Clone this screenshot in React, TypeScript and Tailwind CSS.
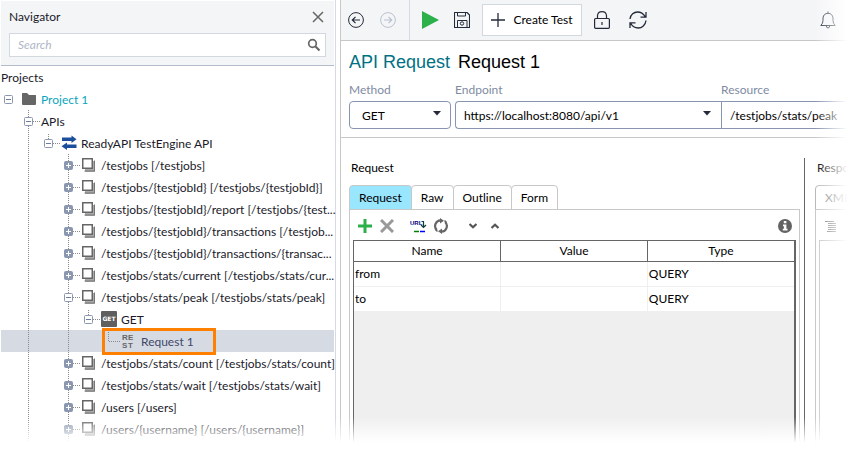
import React, { useState } from 'react';
import clsx from 'clsx';

type NodeIcon = 'folder' | 'api' | 'resource' | 'get' | 'rest';

interface TreeNode {
  label: string;
  depth: number;
  icon?: NodeIcon;
  toggle?: 'open' | 'closed';
  // columns where an ancestor's guide line runs through this row
  guides: number[];
  // the node's own guide stops at the toggle
  last?: boolean;
  selected?: boolean;
  className?: string;
}

const resource = (label: string, toggle: 'open' | 'closed' = 'closed'): TreeNode => ({
  label,
  depth: 3,
  icon: 'resource',
  toggle,
  guides: [1],
});

const NODES: TreeNode[] = [
  { label: 'Project 1', depth: 0, icon: 'folder', toggle: 'open', guides: [], last: true, className: 'text-[#0aa5bd]' },
  { label: 'APIs', depth: 1, toggle: 'open', guides: [] },
  { label: 'ReadyAPI TestEngine API', depth: 2, icon: 'api', toggle: 'open', guides: [1], last: true },
  resource('/testjobs [/testjobs]'),
  resource('/testjobs/{testjobId} [/testjobs/{testjobId}]'),
  resource('/testjobs/{testjobId}/report [/testjobs/{test...'),
  resource('/testjobs/{testjobId}/transactions [/testjob...'),
  resource('/testjobs/{testjobId}/transactions/{transac...'),
  resource('/testjobs/stats/current [/testjobs/stats/cur...'),
  resource('/testjobs/stats/peak [/testjobs/stats/peak]', 'open'),
  { label: 'GET', depth: 4, icon: 'get', toggle: 'open', guides: [1, 3], last: true },
  { label: 'Request 1', depth: 5, icon: 'rest', guides: [1, 3], last: true, selected: true, className: 'text-[#41486a]' },
  resource('/testjobs/stats/count [/testjobs/stats/count]'),
  resource('/testjobs/stats/wait [/testjobs/stats/wait]'),
  resource('/users [/users]'),
  resource('/users/{username} [/users/{username}]'),
];

const PARAMS = [
  { name: 'from', value: '', type: 'QUERY' },
  { name: 'to', value: '', type: 'QUERY' },
];

const TABS = ['Request', 'Raw', 'Outline', 'Form'];

const TreeIcon: React.FC<{ icon: NodeIcon }> = ({ icon }) => {
  switch (icon) {
    case 'folder':
      return (
        <svg width="16" height="16" viewBox="0 0 16 16" fill="#666">
          <path d="M1 2.500Q1 2 1.500 2H6l2 2h6.500q.5 0 .5.500V13q0 1-1 1H2q-1 0-1-1z" />
        </svg>
      );
    case 'api':
      return (
        <svg width="16" height="16" viewBox="0 0 16 16" fill="#1b4f9c">
          <path d="M1 2.500h9.500V.500L15.500 4.300l-5 3.700V6H1zM15.500 9.500H6v-2L.500 11.300 6 15v-2h9.500z" />
        </svg>
      );
    case 'resource':
      return (
        <svg width="16" height="16" viewBox="0 0 16 16">
          <path d="M12.500 4v9.500H4" fill="none" stroke="#aaa" strokeWidth="3" />
          <path d="M13.500 3.500v10.500H3.500" fill="none" stroke="#777" strokeWidth="1" />
          <rect x="1.750" y="1.750" width="9.500" height="9.500" fill="#fff" stroke="#666" strokeWidth="1.500" />
        </svg>
      );
    case 'get':
      return (
        <svg width="16" height="16" viewBox="0 0 16 16">
          <rect width="16" height="16" rx="1" fill="#5f5f5f" />
          <text x="8" y="10" textAnchor="middle" fill="#fff" fontSize="6" fontWeight="900" fontFamily="DejaVu Sans, sans-serif">GET</text>
        </svg>
      );
    case 'rest':
      return (
        <svg width="16" height="18" viewBox="0 0 16 18" fill="#666" fontSize="8" fontWeight="700" fontFamily="Liberation Sans, sans-serif">
          <text x="1" y="8">R</text>
          <text x="7" y="8">E</text>
          <text x="1" y="16">S</text>
          <text x="7" y="16">T</text>
        </svg>
      );
  }
};

const Guide: React.FC<{ node: TreeNode; column: number }> = ({ node, column }) => {
  const own = column === node.depth;
  const through = node.guides.includes(column) || (own && !node.last);
  const top = own && node.last && column > 0;
  return (
    <svg className="shrink-0" width="20" height="22" viewBox="0 0 20 22" shapeRendering="crispEdges">
      {through && <path d="M7.500 0v22" stroke="#8a8a8a" strokeDasharray="1 1" />}
      {top && <path d="M7.500 2v10" stroke="#8a8a8a" strokeDasharray="1 1" />}
      {own && column > 0 && <path d="M8 11.500h11" stroke="#8a8a8a" strokeDasharray="1 1" />}
      {own && node.toggle && (
        <g shapeRendering="auto">
          <rect
            x="3.500"
            y="7.500"
            width="8"
            height="8"
            rx="1"
            fill={node.toggle === 'open' ? '#fff' : '#8b97b0'}
            stroke="#8b97b0"
          />
          <path
            d={node.toggle === 'open' ? 'M5 11.500h5' : 'M5 11.500h5M7.500 9v5'}
            stroke={node.toggle === 'open' ? '#6f7c98' : '#fff'}
          />
        </g>
      )}
    </svg>
  );
};

const TreeRow: React.FC<{ node: TreeNode }> = ({ node }) => (
  <li
    role="treeitem"
    aria-level={node.depth + 1}
    aria-selected={!!node.selected}
    className={clsx('relative flex h-[22px] items-center whitespace-nowrap', node.selected && 'bg-[#d6dbe3]')}
  >
    {Array.from({ length: node.depth + 1 }, (_, i) => (
      <Guide key={i} node={node} column={i} />
    ))}
    {node.icon && (
      <span className="w-5 shrink-0">
        <TreeIcon icon={node.icon} />
      </span>
    )}
    <span className={clsx('pt-0.5 leading-5', node.className)}>{node.label}</span>
    {node.selected && <span className="absolute -top-0.5 left-[101px] h-[27px] w-[114px] border-3 border-[#ff8000]" />}
  </li>
);

const Navigator: React.FC = () => (
  <aside className="ml-px w-[335px] shrink-0 border-r border-[#d5dae3] pr-px">
    <div className="mt-px border-b border-[#b4bccb] bg-[#f4f5f7] px-2 pb-2">
      <div className="flex h-8 items-center justify-between">
        <h2>Navigator</h2>
        <button aria-label="Close" className="mr-0.5">
          <svg width="12" height="12" viewBox="0 0 12 12" stroke="#666" strokeWidth="1.500">
            <path d="M1 1l10 10M11 1L1 11" />
          </svg>
        </button>
      </div>
      <label className="flex h-6 items-center border border-[#d2d7e0] bg-white pr-1 pl-2">
        <input
          type="text"
          aria-label="Search"
          placeholder="Search"
          className="min-w-0 flex-1 outline-none placeholder:text-[#b0b7c6] placeholder:italic"
        />
        <svg width="14" height="14" viewBox="0 0 14 14" fill="none" stroke="#666">
          <circle cx="5.500" cy="5.500" r="3.800" strokeWidth="1.700" />
          <path d="M8.500 8.500l4 4" strokeWidth="2.200" />
        </svg>
      </label>
    </div>
    <h3 className="h-[22px] leading-6">Projects</h3>
    <ul role="tree" aria-label="Projects">
      {NODES.map((node) => (
        <TreeRow key={node.label} node={node} />
      ))}
    </ul>
    <svg width="120" height="22" viewBox="0 0 120 22" shapeRendering="crispEdges">
      <path d="M27.500 0v22M67.500 0v22" stroke="#8a8a8a" strokeDasharray="1 1" />
      <rect x="81.500" y="5.500" width="10" height="10" fill="#fff" stroke="#666" />
    </svg>
  </aside>
);

const Toolbar: React.FC = () => (
  <header className="flex h-[41px] items-center border-b border-[#c8c8c8] bg-[#f4f5f7] text-[#242a3a]">
    <div className="flex h-full w-[69px] items-center gap-4 border-r border-[#d5dae3] pl-[7px]">
      <button aria-label="Back">
        <svg width="16" height="16" viewBox="0 0 16 16" fill="none" stroke="currentColor">
          <circle cx="8" cy="8" r="7.400" />
          <path d="M12 8H4.500M7.500 4.800L4.300 8l3.200 3.200" strokeWidth="1.200" />
        </svg>
      </button>
      <button aria-label="Forward" className="text-[#b9c1cf]">
        <svg width="16" height="16" viewBox="0 0 16 16" fill="none" stroke="currentColor">
          <circle cx="8" cy="8" r="7.400" />
          <path d="M4 8h7.500M8.500 4.800L11.700 8l-3.200 3.200" strokeWidth="1.200" />
        </svg>
      </button>
    </div>
    <button aria-label="Run" className="ml-3">
      <svg width="17" height="18" viewBox="0 0 17 18" fill="#2bb04a">
        <path d="M0 0l17 9L0 18z" />
      </svg>
    </button>
    <button aria-label="Save" className="ml-[15px]">
      <svg width="16" height="16" viewBox="0 0 16 16" fill="none" stroke="currentColor">
        <path d="M.500.500H13l2.500 2.500v12.500H.500z" strokeLinejoin="round" strokeWidth="1.100" />
        <path d="M3.500.500v3.500h8V.500M3.500 15.500v-7h9.500v7" />
        <circle cx="8" cy="11.500" r="1.700" />
      </svg>
    </button>
    <button className="ml-3 flex h-8 w-[100px] items-center justify-center gap-2 border border-[#d2d7e0] bg-white text-black">
      <svg width="14" height="14" viewBox="0 0 14 14" stroke="#242a3a" strokeWidth="1.300">
        <path d="M0 7h14M7 0v14" />
      </svg>
      Create Test
    </button>
    <button aria-label="Lock" className="ml-3">
      <svg width="16" height="18" viewBox="0 0 16 18" fill="none" stroke="currentColor" strokeWidth="1.200">
        <rect x=".600" y="7.500" width="14.800" height="9.800" rx="1" />
        <path d="M3.500 7.500V4.500Q4 .700 8 .700t4.500 3.800v3M8 11v3" />
      </svg>
    </button>
    <button aria-label="Refresh" className="ml-[18px]">
      <svg width="20" height="18" viewBox="0 0 20 18" fill="none" stroke="currentColor" strokeWidth="1.300">
        <path d="M2 8C2.500 3.500 6 1 9.500 1c3.500 0 6 1.800 7.800 4.800M18 1v5.200h-5.500M18 9.500c-.5 4.500-4 7.500-7.800 7.500-3.400 0-6-1.800-7.700-5M2 17v-5.200h5.500" />
      </svg>
    </button>
    <button aria-label="Notifications" className="mr-[15px] ml-auto">
      <svg width="16" height="18" viewBox="0 0 16 18" fill="none" stroke="#242a3a">
        <path d="M.800 14.500Q3 12.500 3 9.500V7Q3.500 2.500 8 2.300 12.500 2.500 13 7v2.500q0 3 2.200 5zM8 2.300V.500M6.300 14.500q0 2.500 1.700 2.500t1.700-2.500" />
      </svg>
    </button>
  </header>
);

const Caret: React.FC = () => (
  <svg className="pointer-events-none absolute top-2.5 right-2.5" width="8" height="5" viewBox="0 0 8 5" fill="#242a3a">
    <path d="M0 0h8L4 4.500z" />
  </svg>
);

const RequestLine: React.FC = () => (
  <div className="flex border-b border-[#c8c8c8] pb-2 pl-2 text-[#808ba3]">
    <div className="mr-1 w-[102px] shrink-0">
      <label htmlFor="method" className="block h-[21px] leading-5">Method</label>
      <div className="relative">
        <select id="method" defaultValue="GET" className="h-7 w-full appearance-none rounded-sm border border-[#8795b0] bg-white pt-0.5 pl-3 text-black">
          <option>GET</option>
          <option>POST</option>
        </select>
        <Caret />
      </div>
    </div>
    <div className="min-w-0 flex-1">
      <label htmlFor="endpoint" className="block h-[21px] leading-5">Endpoint</label>
      <div className="relative">
        <select id="endpoint" className="h-7 w-full appearance-none rounded-l-sm border border-r-0 border-[#8795b0] bg-white pt-0.5 pl-2 text-black">
          <option>https://localhost:8080/api/v1</option>
        </select>
        <Caret />
      </div>
    </div>
    <div className="w-[130px] shrink-0">
      <label htmlFor="resource" className="block h-[21px] leading-5">Resource</label>
      <input id="resource" type="text" defaultValue="/testjobs/stats/peak" className="h-7 w-full border border-r-0 border-[#8795b0] px-2 text-black outline-none" />
    </div>
  </div>
);

const ParamsToolbar: React.FC = () => (
  <div className="flex h-[30px] items-center px-1 pt-0.5">
    <button aria-label="Add" className="ml-px">
      <svg width="14" height="14" viewBox="0 0 14 14" stroke="#2bb04a" strokeWidth="3">
        <path d="M0 7h14M7 0v14" />
      </svg>
    </button>
    <button aria-label="Remove" className="ml-2">
      <svg width="14" height="14" viewBox="0 0 14 14" stroke="#999" strokeWidth="3">
        <path d="M1 1l12 12M13 1L1 13" />
      </svg>
    </button>
    <button aria-label="Update from URL" className="ml-4">
      <svg width="18" height="14" viewBox="0 0 18 14">
        <text x="0" y="6" fill="#000080" fontSize="6" fontWeight="700" fontFamily="Liberation Sans, sans-serif">URL</text>
        <path d="M11.500 2.500h2V8M11 6l2.500 2.500L16 6" fill="none" stroke="#123c3c" strokeWidth="1.200" />
        <path d="M4 12.500h5" stroke="#008000" strokeWidth="1.500" />
        <path d="M10 12.500h5" stroke="#00f" strokeWidth="1.500" />
      </svg>
    </button>
    <button aria-label="Revert" className="ml-[5px]">
      <svg width="16" height="16" viewBox="0 0 16 16">
        <path d="M3.800 12A5.700 5.700 0 0 1 7.500 2.300M12.200 4a5.700 5.700 0 0 1-3.700 9.700" fill="none" stroke="#666" strokeWidth="2.200" />
        <path d="M7 0l4 2.700L7 5.500zM9 16l-4-2.700L9 10.500z" fill="#666" />
        <path d="M11.500 2.500l2 2M2.500 11.500l2 2" stroke="#666" strokeWidth="1.500" />
      </svg>
    </button>
    <button aria-label="Move down" className="ml-5">
      <svg width="8" height="6" viewBox="0 0 8 6" fill="none" stroke="#555" strokeWidth="2.200">
        <path d="M.500 1L4 4.300 7.500 1" />
      </svg>
    </button>
    <button aria-label="Move up" className="ml-3.5">
      <svg width="8" height="6" viewBox="0 0 8 6" fill="none" stroke="#555" strokeWidth="2.200">
        <path d="M.500 5L4 1.700 7.500 5" />
      </svg>
    </button>
    <button aria-label="Info" className="ml-auto">
      <svg width="14" height="14" viewBox="0 0 14 14">
        <circle cx="7" cy="7" r="7" fill="#636363" />
        <path d="M5.800 2h2.600v2.200H5.800zM5 5.500h3.400v4.300H9.500v1.700H4.800V9.800h1.100V7.200H5z" fill="#fff" />
      </svg>
    </button>
  </div>
);

const RequestPane: React.FC = () => {
  const [active, setActive] = useState('Request');
  return (
    <section className="mr-1 flex min-w-0 flex-1 flex-col pl-2">
      <h2 className="h-[27px] pl-0.5 leading-5">Request</h2>
      <div role="tablist" className="-mb-px flex">
        {TABS.map((tab) => (
          <button
            key={tab}
            role="tab"
            aria-selected={tab === active}
            onClick={() => setActive(tab)}
            className={clsx(
              '-mr-px h-[25px] rounded-t-sm border border-[#c8c8c8] px-[9px]',
              tab === active ? 'bg-[#99e6ff]' : 'bg-white'
            )}
          >
            {tab}
          </button>
        ))}
      </div>
      <div className="flex flex-1 flex-col border border-b-0 border-[#c8c8c8] px-[3px]">
        <ParamsToolbar />
        <div className="flex-1 border-l border-r-2 border-[#666] bg-[#efefef]">
          <table className="w-full table-fixed border-collapse bg-white">
            <thead>
              <tr className="h-[21px]">
                {['Name', 'Value', 'Type'].map((head) => (
                  <th key={head} className="border-y border-r border-[#666] p-0 font-normal last:border-r-0">{head}</th>
                ))}
              </tr>
            </thead>
            <tbody>
              {PARAMS.map((param) => (
                <tr key={param.name} className="h-[25px] border-b border-[#efefef]">
                  <td className="border-r border-[#efefef] p-0 pl-px">{param.name}</td>
                  <td className="border-r border-[#efefef] p-0 pl-px">{param.value}</td>
                  <td className="p-0 pl-px">{param.type}</td>
                </tr>
              ))}
            </tbody>
          </table>
        </div>
      </div>
    </section>
  );
};

const ResponsePane: React.FC = () => (
  <section className="flex w-[47px] shrink-0 flex-col border-l border-[#666] pl-2.5">
    <h2 className="h-[27px] pl-0.5 leading-5">Response</h2>
    <div role="tablist" className="-mb-px flex">
      <button role="tab" aria-selected="false" className="h-[25px] rounded-t-sm border border-[#b8b8b8] px-[9px] text-[#777]">XML</button>
    </div>
    <div className="flex flex-1 flex-col border-t border-l border-[#c8c8c8] pl-[3px]">
      <div className="flex h-[30px] items-center pt-0.5 pl-1.5">
        <button aria-label="Format">
          <svg width="12" height="12" viewBox="0 0 12 12" stroke="#777" shapeRendering="crispEdges">
            <path d="M0 1.500h9M3 3.500h8M3 5.500h8M3 7.500h8M3 9.500h8M2 11.500h9" />
          </svg>
        </button>
      </div>
      <div className="flex-1 border-t border-l border-[#c8c8c8]" />
    </div>
  </section>
);

const App: React.FC = () => (
  <div className="relative flex h-screen min-h-[449px] overflow-hidden bg-white font-['Lato','Open_Sans',sans-serif] text-xs text-[#1a1a2a]">
    <Navigator />
    <main className="ml-1 flex min-w-0 flex-1 flex-col border-l border-[#c8c8c8] text-black">
      <Toolbar />
      <h1 className="flex h-[39px] items-center gap-2 pt-0.5 pl-2 font-['Liberation_Sans',Arial,sans-serif] text-lg">
        <span className="text-[#007185]">API Request</span>
        <span>Request 1</span>
      </h1>
      <RequestLine />
      <div className="flex flex-1 pt-5">
        <RequestPane />
        <ResponsePane />
      </div>
    </main>
    {/* the window fades out towards the right and the bottom */}
    <div className="pointer-events-none absolute inset-y-0 right-0 w-9 bg-linear-to-r from-transparent to-white to-90%" />
    <div className="pointer-events-none absolute inset-x-0 bottom-0 h-8 bg-linear-to-b from-transparent to-white to-80%" />
  </div>
);

export default App;
